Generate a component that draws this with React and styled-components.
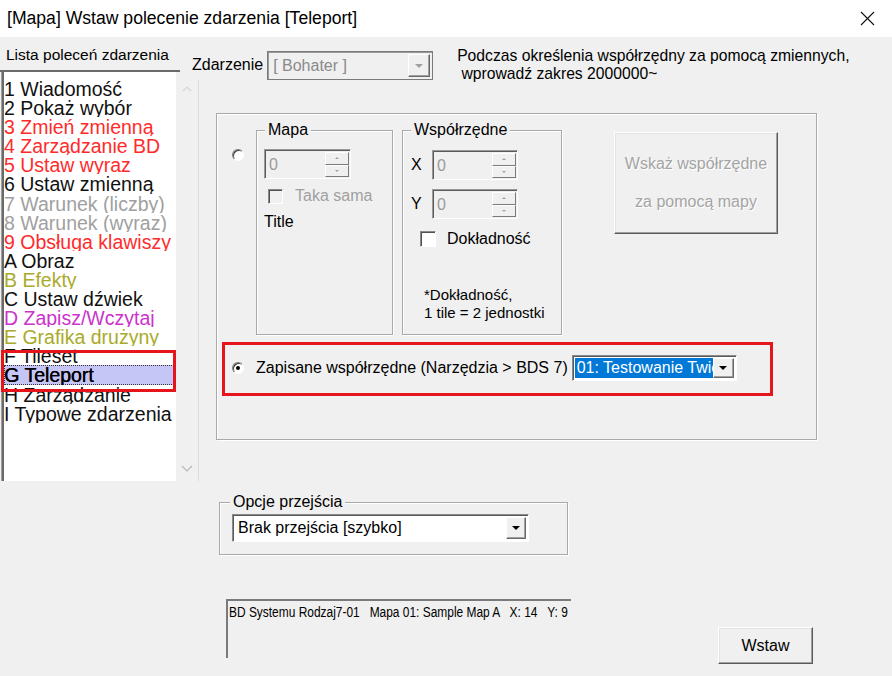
import React from 'react';
import styled, { createGlobalStyle } from 'styled-components';

const GlobalStyle = createGlobalStyle`
  html, body {
    margin: 0;
    padding: 0;
    background: #f0f0f0;
  }
  body {
    font-family: "Liberation Sans", Arial, sans-serif;
    color: #000;
  }
`;

const Window = styled.div`
  width: 892px;
  height: 676px;
  display: flex;
  flex-direction: column;
  overflow: hidden;
  background: #f0f0f0;
`;

const TitleBar = styled.div`
  height: 37px;
  flex: none;
  background: #fff;
  display: flex;
  align-items: center;
  justify-content: space-between;
  padding: 0 17px 0 7px;
  box-sizing: border-box;
`;

const Title = styled.span`
  font-size: 17.6px;
`;

const Body = styled.div`
  flex: 1;
  display: grid;
  grid-template-columns: 176px 10px 13px 1fr;
  grid-template-rows: 35px 8px 1fr;
  grid-template-areas:
    "label label top top"
    "list . top top"
    "list scroll scroll main";
`;

const ListLabel = styled.div`
  grid-area: label;
  margin-right: 6px;
  padding: 9px 0 0 6px;
  font-size: 15.5px;
  border-bottom: 2px solid #6a6a6a;
  box-sizing: border-box;
  white-space: nowrap;
`;

const List = styled.div`
  grid-area: list;
  align-self: start;
  position: relative;
  height: 409px;
  margin-left: 1px;
  padding: 7px 0 0 2px;
  box-sizing: border-box;
  background: #fff;
  border-left: 1px solid #a0a0a0;
  box-shadow: inset 2px 0 0 #6a6a6a;
`;

const Item = styled.div`
  height: 19.1px;
  line-height: 20px;
  font-size: 19.5px;
  white-space: nowrap;
  overflow: hidden;
  color: ${p => p.$color};
  ${p => p.$selected && `
    background: #c6c6f6;
    outline: 1px dotted #333;
    outline-offset: -1px;
    text-shadow: 0.4px 0 0 #000;
  `}
`;

const Annotation = styled.div`
  position: absolute;
  left: ${p => p.$left}px;
  top: ${p => p.$top}px;
  width: ${p => p.$w}px;
  height: ${p => p.$h}px;
  border: 3px solid #e8141c;
  box-sizing: border-box;
  pointer-events: none;
`;

const ScrollTrack = styled.div`
  grid-area: scroll;
  align-self: start;
  height: 401px;
  display: flex;
  flex-direction: column;
  justify-content: space-between;
  align-items: center;
  padding: 5px 0 8px;
  box-sizing: border-box;
  border-right: 1px solid #dcdcdc;
`;

const TopBar = styled.div`
  grid-area: top;
  display: flex;
  align-items: flex-start;
  padding-left: 6px;
`;

const TopLabel = styled.span`
  margin-top: 20px;
  font-size: 16px;
  line-height: 16px;
`;

const Hint = styled.div`
  margin: 10px 0 0 24px;
  font-size: 15.7px;
  line-height: 18px;
  white-space: pre;
`;

const Combo = styled.div`
  display: flex;
  align-items: stretch;
  width: ${p => p.$w}px;
  height: ${p => p.$h}px;
  margin-left: ${p => p.$ml || 0}px;
  margin-top: ${p => p.$mt || 0}px;
  flex: none;
  box-sizing: border-box;
  border: 1px solid;
  border-color: ${p => (p.$disabled ? '#7a7a7a' : '#8a8a8a #fff #fff #8a8a8a')};
  box-shadow: inset 1px 1px 0 ${p => (p.$disabled ? '#9a9a9a' : '#5a5a5a')};
  background: ${p => (p.$disabled ? '#f0f0f0' : '#fff')};
  padding: 2px;
  font-size: 16px;
`;

const ComboText = styled.div`
  flex: 1;
  display: flex;
  align-items: center;
  padding-left: 3px;
  white-space: nowrap;
  overflow: hidden;
  color: ${p => (p.$disabled ? '#8a8a8a' : '#000')};
`;

const SelectedText = styled.span`
  background: #0078d7;
  color: #fff;
  padding: 2px;
  margin-left: -3px;
  flex: 1;
  white-space: nowrap;
  overflow: hidden;
`;

const ArrowButton = styled.div`
  width: ${p => p.$w || 20}px;
  flex: none;
  display: flex;
  align-items: center;
  justify-content: center;
  box-sizing: border-box;
  background: #f0f0f0;
  border: 1px solid;
  border-color: #fff #6a6a6a #6a6a6a #fff;
  box-shadow: inset -1px -1px 0 #a0a0a0;
`;

const Triangle = styled.span`
  width: 0;
  height: 0;
  border-left: ${p => p.$s}px solid transparent;
  border-right: ${p => p.$s}px solid transparent;
  border-${p => (p.$up ? 'bottom' : 'top')}: ${p => p.$s}px solid ${p => p.$color};
`;

const Main = styled.div`
  grid-area: main;
  display: flex;
  flex-direction: column;
  align-items: flex-start;
`;

const GroupBox = styled.div`
  position: relative;
  width: ${p => p.$w}px;
  height: ${p => p.$h}px;
  box-sizing: border-box;
  border: 1px solid #a9a9a9;
  box-shadow: inset 1px 1px 0 #fff, 1px 1px 0 #fff;
  padding: ${p => p.$pad};
  margin: ${p => p.$margin || 0};
  flex: none;
`;

const Legend = styled.span`
  position: absolute;
  top: -10px;
  left: ${p => p.$left || 8}px;
  padding: 0 3px;
  background: #f0f0f0;
  font-size: 16px;
  line-height: 18px;
  white-space: nowrap;
`;

const Row = styled.div`
  display: flex;
  align-items: ${p => p.$align || 'flex-start'};
  margin-top: ${p => p.$mt || 0}px;
  margin-left: ${p => p.$ml || 0}px;
  height: ${p => (p.$h ? `${p.$h}px` : 'auto')};
`;

const Radio = styled.span`
  position: relative;
  width: 12px;
  height: 12px;
  flex: none;
  border-radius: 50%;
  box-sizing: border-box;
  border: 1px solid;
  border-color: #7a7a7a #fff #fff #7a7a7a;
  box-shadow: inset 1px 1px 0 #404040;
  background: #fff;
  margin-top: ${p => p.$mt || 0}px;
  margin-right: 12px;
  ${p => p.$checked && `
    &::after {
      content: '';
      position: absolute;
      left: 3px;
      top: 3px;
      width: 4px;
      height: 4px;
      border-radius: 50%;
      background: #000;
    }
  `}
`;

const Spin = styled.div`
  display: flex;
  width: ${p => p.$w}px;
  height: 30px;
  flex: none;
  box-sizing: border-box;
  border: 1px solid;
  border-color: #9a9a9a #fff #fff #9a9a9a;
  box-shadow: inset 1px 1px 0 #5a5a5a;
  background: #f0f0f0;
  padding: 2px 1px 1px 2px;
`;

const SpinValue = styled.div`
  flex: 1;
  display: flex;
  align-items: center;
  padding-left: 2px;
  font-size: 16px;
  color: #9a9a9a;
`;

const SpinButtons = styled.div`
  width: 24px;
  display: flex;
  flex-direction: column;
`;

const SpinHalf = styled.div`
  flex: 1;
  display: flex;
  align-items: center;
  justify-content: center;
  box-sizing: border-box;
  border: 1px solid;
  border-color: #fff #7a7a7a #7a7a7a #fff;
  background: #f0f0f0;
`;

const Check = styled.span`
  width: ${p => p.$size}px;
  height: ${p => p.$size}px;
  flex: none;
  box-sizing: border-box;
  border: 1px solid;
  border-color: #8a8a8a #fff #fff #8a8a8a;
  box-shadow: inset 1px 1px 0 #505050;
  background: ${p => (p.$disabled ? '#f0f0f0' : '#fff')};
  margin-right: ${p => p.$gap}px;
`;

const Label = styled.span`
  font-size: ${p => p.$size || 16}px;
  line-height: 18px;
  color: ${p => (p.$disabled ? '#a0a0a0' : '#000')};
  white-space: ${p => (p.$pre ? 'pre' : 'nowrap')};
  margin-top: ${p => p.$mt || 0}px;
  margin-left: ${p => p.$ml || 0}px;
  width: ${p => (p.$w ? `${p.$w}px` : 'auto')};
  flex: none;
  display: inline-block;
`;

const RaisedButton = styled.div`
  width: ${p => p.$w}px;
  height: ${p => p.$h}px;
  margin: ${p => p.$margin || 0};
  flex: none;
  box-sizing: border-box;
  display: flex;
  flex-direction: column;
  align-items: center;
  justify-content: center;
  background: #f0f0f0;
  border: 1px solid;
  border-color: #fff #5a5a5a #5a5a5a #fff;
  box-shadow: inset -1px -1px 0 #a0a0a0, inset 1px 1px 0 #e3e3e3;
  font-size: 16px;
  line-height: ${p => p.$lh || 18}px;
  color: ${p => (p.$disabled ? '#a4a4a4' : '#000')};
  text-shadow: ${p => (p.$disabled ? '1px 1px 0 #fff' : 'none')};
  white-space: nowrap;
`;

const StatusBox = styled.div`
  width: 345px;
  height: 59px;
  margin-left: 27px;
  flex: none;
  box-sizing: border-box;
  border-top: 2px solid #7a7a7a;
  border-left: 2px solid #7a7a7a;
  padding: 2px 0 0 1px;
  overflow: hidden;
`;

const StatusText = styled.span`
  display: inline-block;
  font-size: 15.5px;
  line-height: 18px;
  white-space: pre;
  transform: scaleX(0.77);
  transform-origin: left center;
`;

const items = [
  ['1 Wiadomość', '#111'],
  ['2 Pokaż wybór', '#111'],
  ['3 Zmień zmienną', '#ff2b2b'],
  ['4 Zarządzanie BD', '#ff2b2b'],
  ['5 Ustaw wyraz', '#ff2b2b'],
  ['6 Ustaw zmienną', '#111'],
  ['7 Warunek (liczby)', '#a0a0a0'],
  ['8 Warunek (wyraz)', '#a0a0a0'],
  ['9 Obsługa klawiszy', '#ff2b2b'],
  ['A Obraz', '#111'],
  ['B Efekty', '#aaaa2a'],
  ['C Ustaw dźwiek', '#111'],
  ['D Zapisz/Wczytaj', '#cc33cc'],
  ['E Grafika drużyny', '#aaaa2a'],
  ['F Tileset', '#111'],
  ['G Teleport', '#000', true],
  ['H Zarządzanie', '#111'],
  ['I Typowe zdarzenia', '#111'],
];

const CloseIcon = () => (
  <svg width="15" height="15" viewBox="0 0 15 15">
    <path d="M1 1 L14 14 M14 1 L1 14" stroke="#111" strokeWidth="1.1" fill="none" />
  </svg>
);

const Chevron = ({ up }) => (
  <svg width="12" height="8" viewBox="0 0 12 8">
    <path
      d={up ? 'M2 6 L6 2 L10 6' : 'M1 1 L6 6 L11 1'}
      stroke={up ? '#d6d6d6' : '#b8b8b8'}
      strokeWidth="1.2"
      fill="none"
    />
  </svg>
);

const SpinBox = ({ w }) => (
  <Spin $w={w}>
    <SpinValue>0</SpinValue>
    <SpinButtons>
      <SpinHalf>
        <Triangle $up $s={2} $color="#a0a0a0" />
      </SpinHalf>
      <SpinHalf>
        <Triangle $s={2} $color="#a0a0a0" />
      </SpinHalf>
    </SpinButtons>
  </Spin>
);

export default function App() {
  return (
    <Window>
      <GlobalStyle />
      <TitleBar>
        <Title>[Mapa] Wstaw polecenie zdarzenia [Teleport]</Title>
        <CloseIcon />
      </TitleBar>
      <Body>
        <ListLabel>Lista poleceń zdarzenia</ListLabel>
        <List>
          {items.map(([text, color, selected]) => (
            <Item key={text} $color={color} $selected={selected}>
              {text}
            </Item>
          ))}
          <Annotation $left={-1} $top={278} $w={175} $h={42} />
        </List>
        <ScrollTrack>
          <Chevron up />
          <Chevron />
        </ScrollTrack>

        <TopBar>
          <TopLabel>Zdarzenie</TopLabel>
          <Combo $w={166} $h={29} $ml={4} $mt={14} $disabled>
            <ComboText $disabled>[ Bohater ]</ComboText>
            <ArrowButton $w={22}>
              <Triangle $s={4} $color="#a0a0a0" />
            </ArrowButton>
          </Combo>
          <Hint>{'Podczas określenia współrzędny za pomocą zmiennych,\n wprowadź zakres 2000000~'}</Hint>
        </TopBar>

        <Main>
          <GroupBox $w={601} $h={327} $margin="33px 0 0 17px" $pad="16px 0 0 15px">
            <Row>
              <Radio $mt={19} />
              <GroupBox $w={137} $h={205} $pad="18px 0 0 7px">
                <Legend>Mapa</Legend>
                <SpinBox w={87} />
                <Row $mt={8} $ml={4} $align="center">
                  <Check $size={15} $gap={12} $disabled />
                  <Label $disabled>Taka sama</Label>
                </Row>
                <Label $mt={8}>Title</Label>
              </GroupBox>
              <GroupBox $w={160} $h={205} $margin="0 0 0 9px" $pad="19px 0 0 8px">
                <Legend>Współrzędne</Legend>
                <Row $align="center">
                  <Label $w={21}>X</Label>
                  <SpinBox w={86} />
                </Row>
                <Row $align="center" $mt={9}>
                  <Label $w={21}>Y</Label>
                  <SpinBox w={86} />
                </Row>
                <Row $align="center" $mt={11} $ml={9}>
                  <Check $size={16} $gap={11} />
                  <Label>Dokładność</Label>
                </Row>
                <Label $pre $size={15} $mt={38} $ml={13}>{'*Dokładność,\n1 tile = 2 jednostki'}</Label>
              </GroupBox>
              <RaisedButton $w={164} $h={102} $lh={38} $margin="2px 0 0 52px" $disabled>
                <span>Wskaż współrzędne</span>
                <span>za pomocą mapy</span>
              </RaisedButton>
            </Row>
            <Row $align="center" $mt={20} $h={26}>
              <Radio $checked />
              <Label>Zapisane współrzędne (Narzędzia &gt; BDS 7)</Label>
              <Combo $w={165} $h={26} $ml={4}>
                <ComboText>
                  <SelectedText>01: Testowanie Twierdzy</SelectedText>
                </ComboText>
                <ArrowButton $w={21}>
                  <Triangle $s={4} $color="#000" />
                </ArrowButton>
              </Combo>
            </Row>
            <Annotation $left={5} $top={228} $w={551} $h={54} />
          </GroupBox>

          <GroupBox $w={349} $h={53} $margin="62px 0 0 20px" $pad="11px 0 0 12px">
            <Legend $left={10}>Opcje przejścia</Legend>
            <Combo $w={297} $h={28}>
              <ComboText>Brak przejścia [szybko]</ComboText>
              <ArrowButton $w={20}>
                <Triangle $s={4} $color="#000" />
              </ArrowButton>
            </Combo>
          </GroupBox>

          <Row $mt={44}>
            <StatusBox>
              <StatusText>{'BD Systemu Rodzaj7-01   Mapa 01: Sample Map A   X: 14   Y: 9'}</StatusText>
            </StatusBox>
            <RaisedButton $w={95} $h={37} $margin="28px 0 0 147px">Wstaw</RaisedButton>
          </Row>
        </Main>
      </Body>
    </Window>
  );
}
